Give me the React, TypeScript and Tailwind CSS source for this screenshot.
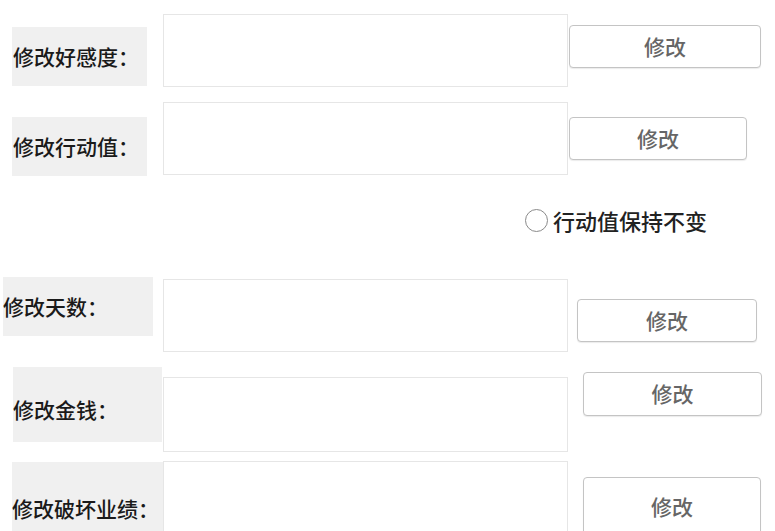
const font = { fontFamily: '"Microsoft YaHei", "Noto Sans CJK SC", "Noto Sans", sans-serif' };

function Label({ text, className }: { text: string; className: string }) {
  return (
    <div className={`flex shrink-0 items-center bg-[#f0f0f0] text-[21px] font-medium text-[#1a1a1a] ${className}`}>
      {text}
    </div>
  );
}

function Field({ className }: { className: string }) {
  return <input className={`h-[73px] w-[405px] shrink-0 border border-[#e6e6e6] bg-white outline-none ${className}`} />;
}

function Btn({ className }: { className: string }) {
  return (
    <button className={`flex shrink-0 items-center justify-center rounded-[4px] border border-[#c4c4c4] bg-white text-[21px] font-medium text-[#666] shadow-[0_1px_1px_rgba(0,0,0,0.08)] ${className}`}>
      修改
    </button>
  );
}

export default function App() {
  return (
    <div className="h-[531px] w-[775px] overflow-hidden bg-white pt-[14px]" style={font}>
      {/* 好感度 */}
      <div className="flex items-start">
        <Label text="修改好感度：" className="ml-[12px] mt-[13px] h-[59px] w-[135px] pl-[1px]" />
        <Field className="ml-[16px]" />
        <Btn className="ml-[1px] mt-[11px] h-[43px] w-[192px]" />
      </div>

      {/* 行动值 */}
      <div className="mt-[15px] flex items-start">
        <Label text="修改行动值：" className="ml-[12px] mt-[15px] h-[59px] w-[135px] pl-[1px]" />
        <Field className="ml-[16px]" />
        <Btn className="ml-[1px] mt-[15px] h-[43px] w-[178px]" />
      </div>

      <div className="mt-[31px] flex h-[26px] items-center pl-[525px] text-[22px] font-medium leading-none text-[#222]">
        <span className="mr-[5px] h-[23px] w-[23px] rounded-full border-[1.5px] border-[#8a8a8a]" />
        行动值保持不变
      </div>

      {/* 天数 */}
      <div className="mt-[44px] flex items-start">
        <Label text="修改天数：" className="ml-[3px] h-[59px] w-[150px]" />
        <Field className="ml-[10px] mt-[2px]" />
        <Btn className="ml-[9px] mt-[22px] h-[43px] w-[180px]" />
      </div>

      {/* 金钱 */}
      <div className="mt-[15px] flex items-start">
        <Label text="修改金钱：" className="ml-[13px] h-[75px] w-[149px] pt-[11px]" />
        <Field className="ml-[1px] mt-[10px] h-[75px]" />
        <Btn className="ml-[15px] mt-[5px] h-[44px] w-[179px]" />
      </div>

      {/* 破坏业绩 */}
      <div className="mt-[9px] flex items-start">
        <Label text="修改破坏业绩：" className="ml-[12px] mt-[1px] h-[94px] w-[151px]" />
        <Field className="ml-0" />
        <Btn className="ml-[15px] mt-[16px] h-[60px] w-[178px]" />
      </div>
    </div>
  );
}
